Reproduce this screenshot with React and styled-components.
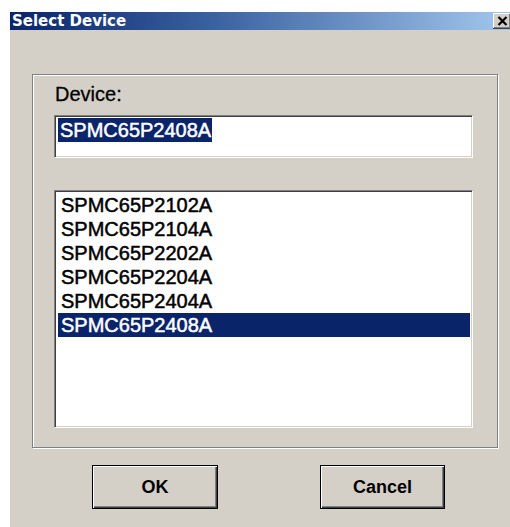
import React, { useState } from 'react';
import styled, { createGlobalStyle } from 'styled-components';

// 클래식 윈도우 대화상자 기본 색상
const FACE = '#d4d0c8';
const NAVY = '#0a246a';

const GlobalStyle = createGlobalStyle`
  html, body {
    margin: 0;
    padding: 0;
    background: #ffffff;
    overflow: hidden;
  }
`;

const Window = styled.div`
  margin: 12px 0 0 10px;
  width: 510px;
  height: 515px;
  background: ${FACE};
  display: flex;
  flex-direction: column;
  font-family: "Liberation Sans", Arial, sans-serif;
`;

const TitleBar = styled.div`
  height: 18px;
  display: flex;
  align-items: center;
  background: linear-gradient(to right, ${NAVY} 0%, #3a62a0 40%, #a6caf0 100%);
  position: relative;
`;

const Title = styled.span`
  font-family: "DejaVu Sans", Verdana, sans-serif;
  font-weight: bold;
  font-size: 15px;
  line-height: 18px;
  color: #ffffff;
  padding-left: 2px;
`;

const CloseButton = styled.button`
  position: absolute;
  left: 483px;
  top: 1px;
  width: 18px;
  height: 16px;
  padding: 0;
  background: ${FACE};
  border: none;
  box-shadow: inset -1px -1px #404040, inset 1px 1px #ffffff, inset -2px -2px #808080;
  display: flex;
  align-items: center;
  justify-content: center;
`;

const Body = styled.div`
  flex: 1;
  padding: 44px 22px 0 22px;
  display: flex;
  flex-direction: column;
`;

const GroupBox = styled.div`
  width: 466px;
  height: 374px;
  box-sizing: border-box;
  border: 1px solid #808080;
  box-shadow: inset 1px 1px 0 #ffffff, 1px 1px 0 #ffffff;
  padding: 8px 0 0 21px;
  display: flex;
  flex-direction: column;
`;

const Label = styled.div`
  font-size: 20px;
  line-height: 23px;
  color: #000000;
  margin-left: 1px;
  -webkit-text-stroke: 0.3px #000000;
`;

const Sunken = styled.div`
  box-sizing: border-box;
  width: 419px;
  background: #ffffff;
  border-top: 1px solid #808080;
  border-left: 1px solid #808080;
  border-bottom: 1px solid #ffffff;
  border-right: 1px solid #ffffff;
  box-shadow: inset 1px 1px 0 #404040, inset -1px -1px 0 ${FACE};
`;

const TextField = styled(Sunken)`
  margin-top: 9px;
  height: 43px;
  padding: 2px 0 0 3px;
`;

const Selected = styled.span`
  display: inline-block;
  background: ${NAVY};
  color: #ffffff;
  font-size: 20px;
  line-height: 24px;
  padding: 0 1px 0 2px;
  -webkit-text-stroke: 0.5px #ffffff;
`;

const ListBox = styled(Sunken)`
  margin-top: 32px;
  height: 238px;
  padding: 2px 2px 0 1px;
`;

const Row = styled.div`
  height: 24px;
  line-height: 24px;
  font-size: 20px;
  margin-left: 2px;
  padding-left: 3px;
  background: ${p => (p.$active ? NAVY : 'transparent')};
  color: ${p => (p.$active ? '#ffffff' : '#000000')};
  -webkit-text-stroke: 0.5px ${p => (p.$active ? '#ffffff' : '#000000')};
  white-space: nowrap;
`;

const ButtonRow = styled.div`
  display: flex;
  gap: 102px;
  padding: 17px 0 0 60px;
`;

const Button = styled.button`
  box-sizing: border-box;
  width: ${p => p.$w}px;
  height: 44px;
  background: ${FACE};
  border: 1px solid #000000;
  box-shadow: inset 1px 1px 0 #ffffff, inset -1px -1px 0 #404040, inset -2px -2px 0 #808080;
  font-family: "Liberation Sans", Arial, sans-serif;
  font-weight: bold;
  font-size: 18px;
  color: #000000;
  padding: 0;
`;

const devices = [
  'SPMC65P2102A',
  'SPMC65P2104A',
  'SPMC65P2202A',
  'SPMC65P2204A',
  'SPMC65P2404A',
  'SPMC65P2408A',
];

function App() {
  const [current, setCurrent] = useState('SPMC65P2408A');

  return (
    <>
      <GlobalStyle />
      <Window>
        <TitleBar>
          <Title>Select Device</Title>
          <CloseButton aria-label="close">
            <svg width="11" height="10" viewBox="0 0 11 10">
              <path d="M1.5 1 L9.5 9 M9.5 1 L1.5 9" stroke="#000" strokeWidth="2.2" />
            </svg>
          </CloseButton>
        </TitleBar>
        <Body>
          <GroupBox>
            <Label>Device:</Label>
            <TextField>
              <Selected>{current}</Selected>
            </TextField>
            <ListBox>
              {devices.map(d => (
                <Row key={d} $active={d === current} onClick={() => setCurrent(d)}>
                  {d}
                </Row>
              ))}
            </ListBox>
          </GroupBox>
          <ButtonRow>
            <Button $w={126}>OK</Button>
            <Button $w={125}>Cancel</Button>
          </ButtonRow>
        </Body>
      </Window>
    </>
  );
}

export default App;
